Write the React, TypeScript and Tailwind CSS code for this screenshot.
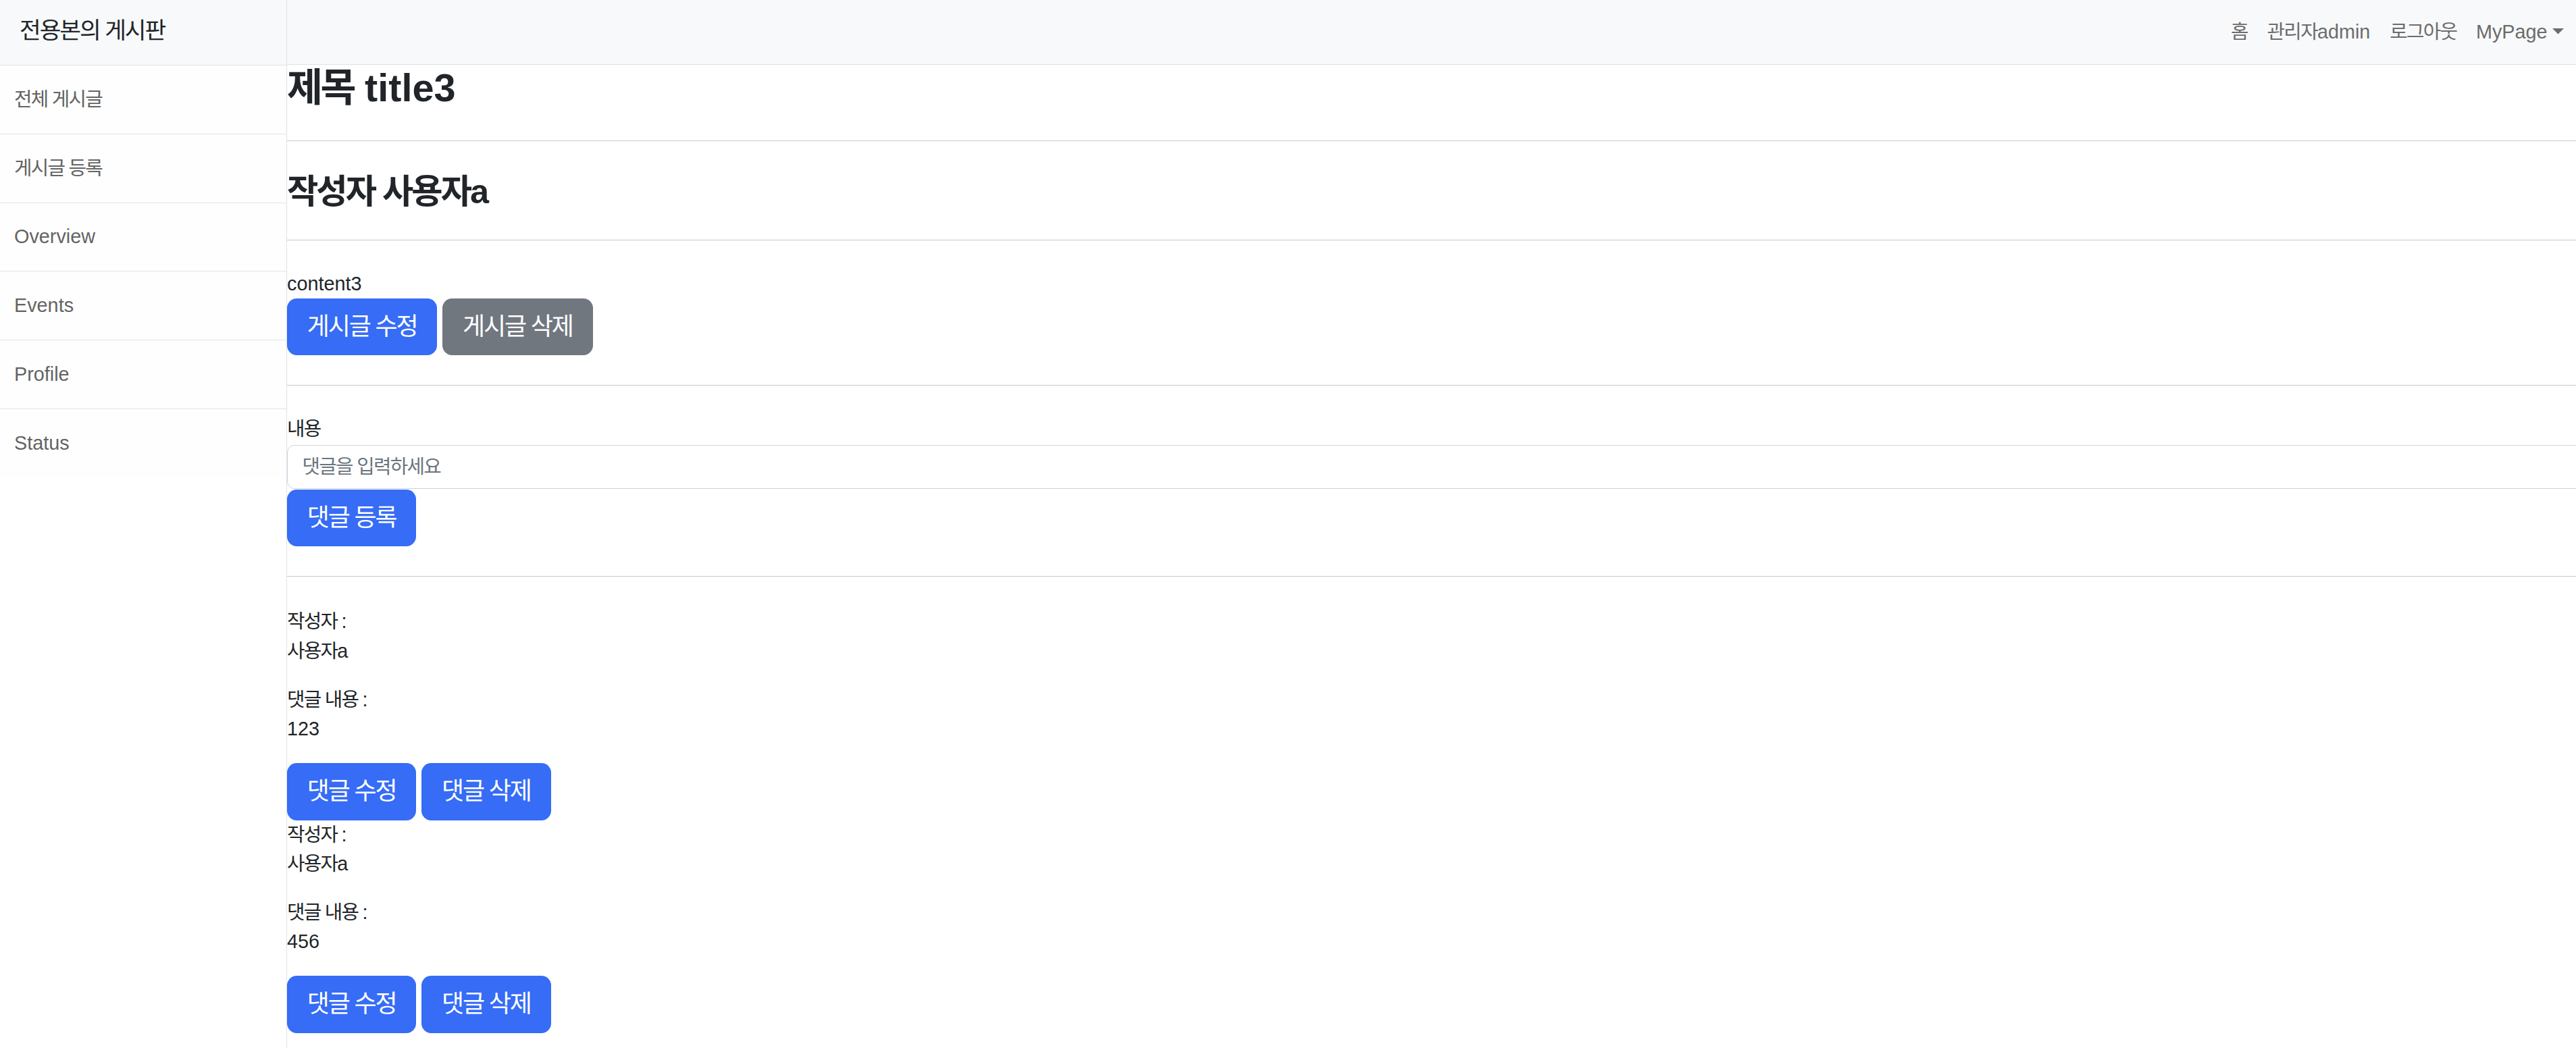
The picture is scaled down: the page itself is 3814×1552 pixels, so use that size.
import type { ReactNode } from 'react';

// Korean text gets a little negative tracking so the Noto hangul
// comes out as narrow as the reference font
const K = ({ children }: { children: ReactNode }) => (
  <span className="tracking-[-0.06em]">{children}</span>
);

const sideItems = [
  { label: '전체 게시글', ko: true },
  { label: '게시글 등록', ko: true },
  { label: 'Overview', ko: false },
  { label: 'Events', ko: false },
  { label: 'Profile', ko: false },
  { label: 'Status', ko: false },
];

const comments = [
  { author: '사용자', suffix: 'a', content: '123' },
  { author: '사용자', suffix: 'a', content: '456' },
];

const btn =
  'inline-block rounded-[14.4px] border border-transparent px-[28.8px] py-[14.4px] text-[36px] leading-[54px] text-white';

const App = () => {
  return (
    <div className="flex min-h-screen bg-white font-['Liberation_Sans','Noto_Sans_CJK_KR',sans-serif] text-[28.8px] leading-[43.2px] text-[#212529]">
      {/* Sidebar */}
      <aside className="w-[425px] shrink-0 border-r border-[#dee2e6] bg-white">
        <div className="flex h-[97px] items-center border-b border-[#dee2e6] bg-[#f8f9fa] px-[29px] pb-[4px] text-[34.5px]">
          <K>전용본의 게시판</K>
        </div>
        <div className="bg-[#fefefe]">
          {sideItems.map((item, i) => (
            <div
              key={item.label}
              className={`px-[21px] py-[28.8px] text-[#636464] ${i < sideItems.length - 1 ? 'border-b border-[#e2e3e5]' : ''}`}
            >
              {item.ko ? <K>{item.label}</K> : item.label}
            </div>
          ))}
        </div>
      </aside>

      <div className="min-w-0 flex-1 overflow-hidden">
        {/* Top navbar */}
        <nav className="flex h-[96px] items-center justify-end border-b border-[#dee2e6] bg-[#f8f9fa] pr-[4px] text-[#6b6c6d]">
          <a className="px-[14.4px]">
            <K>홈</K>
          </a>
          <a className="px-[14.4px]">
            <K>관리자</K>admin
          </a>
          <a className="px-[14.4px]">
            <K>로그아웃</K>
          </a>
          <a className="flex items-center px-[14.4px]">
            MyPage
            <svg width="17" height="9" viewBox="0 0 17 9" className="ml-[7px] mt-[-2px]">
              <path d="M0 0h17L8.5 8.6z" fill="currentColor" />
            </svg>
          </a>
        </nav>

        {/* Post */}
        <main>
          <h2 className="text-[57.6px] font-semibold leading-[69px]">
            <K>제목</K> title3
          </h2>
          <hr className="mb-[45px] mt-[43px] border-[#c8c9ca]" />
          <h3 className="text-[50.4px] font-semibold leading-[60.5px]">
            <K>작성자 사용자</K>a
          </h3>
          <hr className="mb-[43px] mt-[40px] border-[#c8c9ca]" />
          <div>content3</div>
          <div className="flex gap-[8px]">
            <button className={`${btn} bg-[#366cf6]`}>
              <K>게시글 수정</K>
            </button>
            <button className={`${btn} bg-[#71777f]`}>
              <K>게시글 삭제</K>
            </button>
          </div>
          <hr className="mb-[43px] mt-[44px] border-[#c8c9ca]" />

          {/* Comment form */}
          <label className="block">
            <K>내용</K>
          </label>
          <input
            className="mt-[1px] block h-[65px] w-[calc(100%+14px)] rounded-[10.8px] border border-[#ced4da] bg-white px-[21.6px] tracking-[-0.06em] outline-none placeholder:text-[#6c757d]"
            placeholder="댓글을 입력하세요"
          />
          <button className={`${btn} mt-[1px] bg-[#366cf6]`}>
            <K>댓글 등록</K>
          </button>
          <hr className="mb-[45px] mt-[44px] border-[#c8c9ca]" />

          {/* Comments */}
          {comments.map((c, i) => (
            <div key={i}>
              <p className="mb-[28.8px]">
                <K>작성자 :</K>
                <br />
                <K>{c.author}</K>
                {c.suffix}
              </p>
              <p className="mb-[28.8px]">
                <K>댓글 내용 :</K>
                <br />
                {c.content}
              </p>
              <div className="flex gap-[8px]">
                <button className={`${btn} bg-[#366cf6]`}>
                  <K>댓글 수정</K>
                </button>
                <button className={`${btn} bg-[#366cf6]`}>
                  <K>댓글 삭제</K>
                </button>
              </div>
            </div>
          ))}
        </main>
      </div>
    </div>
  );
};

export default App;
